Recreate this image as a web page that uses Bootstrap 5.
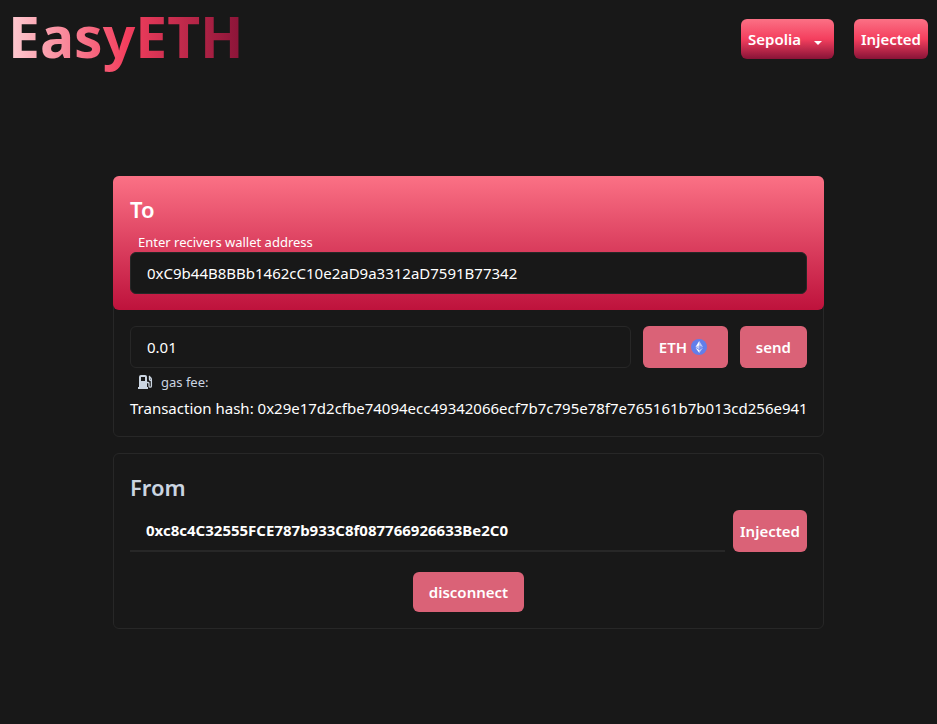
<!DOCTYPE html>
<html lang="en" data-bs-theme="dark">
<head>
<meta charset="utf-8">
<meta name="viewport" content="width=device-width, initial-scale=1">
<title>EasyETH</title>
<link href="https://cdn.jsdelivr.net/npm/bootstrap@5.3.0/dist/css/bootstrap.min.css" rel="stylesheet">
<style>
body { background: #181818; color: #fff; font-family: "Noto Sans", "Open Sans", sans-serif; font-size: 15px; line-height: 24px; }
.logo { font-size: 57px; line-height: 72px; padding-bottom: 6px; font-weight: 700; color: transparent; background: linear-gradient(to right, #fecdd3, #f43f5e, #881337); -webkit-background-clip: text; background-clip: text; text-decoration: none; }
.top-bar { padding: 0 9px 0 8px; }
.bar-btn { height: 40px; padding: 0 7px; border: 0; border-radius: 6px; color: #fff; font-size: 15px; font-weight: 600; background-image: linear-gradient(#fb7185, #f43f5e 50%, #881337); }
.network { appearance: none; width: 93px; background-image: url("data:image/svg+xml,%3Csvg xmlns='http://www.w3.org/2000/svg' viewBox='0 0 8 4'%3E%3Cpath fill='%23fff' d='M0 0h8L4 4z'/%3E%3C/svg%3E"), linear-gradient(#fb7185, #f43f5e 50%, #881337); background-repeat: no-repeat; background-size: 8px 4px, 100% 100%; background-position: right 12px top 22px, 0 0; }
.network option { background: #181818; }
.wallet { max-width: 711px; margin-top: 98px; }
.panel { border: 1px solid #272727; border-radius: 6px; }
.receiver { margin: -1px -1px 0; padding: 16px 17px; border-radius: 6px; background: linear-gradient(#fb7185, #be123c); }
.heading { font-size: 22px; line-height: 34px; font-weight: 600; margin: 0 0 6px; }
.muted { color: #cbd5e1; }
.hint { font-size: 13px; line-height: 20px; padding-left: 8px; }
.field, .field:focus { height: 42px; padding: 0 16px; border: 1px solid #272727; border-radius: 6px; background: #181818; color: #fff; font-size: 15px; box-shadow: none; }
.line-field, .line-field:focus { border-width: 0 0 2px; border-radius: 0; font-weight: 700; background: transparent; }
.rose-btn { height: 42px; border: 0; border-radius: 6px; padding: 0 16px; background: #da6277; color: #fff; font-size: 15px; font-weight: 600; }
.send-row { gap: 12px; }
.token { width: 85px; }
.slim { padding: 0 7px; }
.low { height: 40px; }
.hash { overflow-wrap: anywhere; }
@media (min-width: 768px) { .hash { white-space: nowrap; } }
</style>
</head>
<body>
<header class="top-bar d-flex align-items-center justify-content-between">
  <a class="logo" href="#">EasyETH</a>
  <div class="d-flex gap-3">
    <select class="bar-btn network me-1" aria-label="Network"><option>Sepolia</option></select>
    <button class="bar-btn" type="button">Injected</button>
  </div>
</header>
<main class="wallet mx-auto d-flex flex-column gap-3">
  <section class="panel">
    <div class="receiver">
      <h2 class="heading">To</h2>
      <label class="hint d-block" for="address">Enter recivers wallet address</label>
      <input class="field form-control" id="address" type="text" value="0xC9b44B8BBb1462cC10e2aD9a3312aD7591B77342">
    </div>
    <div class="p-3">
      <div class="d-flex send-row">
        <input class="field form-control flex-grow-1" type="text" value="0.01" aria-label="Amount">
        <button class="rose-btn token flex-shrink-0 d-flex align-items-center gap-1" type="button">ETH
          <svg width="16" height="16" viewBox="0 0 32 32" aria-hidden="true"><circle cx="16" cy="16" r="16" fill="#627eea"/><g fill="#fff"><path fill-opacity=".6" d="M16.5 4v8.87l7.5 3.35z"/><path d="M16.5 4 9 16.22l7.5-3.35z"/><path fill-opacity=".6" d="M16.5 21.97V28L24 17.62z"/><path d="M16.5 28v-6.03L9 17.62z"/><path fill-opacity=".2" d="m16.5 20.57 7.5-4.35-7.5-3.35z"/><path fill-opacity=".6" d="m9 16.22 7.5 4.35v-7.7z"/></g></svg>
        </button>
        <button class="rose-btn flex-shrink-0" type="button">send</button>
      </div>
      <div class="hint muted d-flex align-items-center gap-2 mt-1">
        <svg width="15" height="15" viewBox="0 0 15 15" aria-hidden="true"><path fill="#cbd5e1" fill-rule="evenodd" d="M1 12V2q0-2 2-2h4q2 0 2 2v10h1v2H0v-2zM3 2v4h4V2z"/><path d="M9 7.500h1q1 0 1 1V11q0 1.200 1.200 1.200T13.400 11V4.500Q13.400 3 11 1M11.500 2v2.500q0 1 1.500 1.200" fill="none" stroke="#cbd5e1" stroke-width="1.300"/></svg>
        gas fee:
      </div>
      <div class="hash mt-1">Transaction hash: 0x29e17d2cfbe74094ecc49342066ecf7b7c795e78f7e765161b7b013cd256e941</div>
    </div>
  </section>
  <section class="panel p-3">
    <h2 class="heading muted">From</h2>
    <div class="d-flex gap-2">
      <input class="field line-field form-control flex-grow-1" type="text" value="0xc8c4C32555FCE787b933C8f087766926633Be2C0" aria-label="Sender wallet address">
      <button class="rose-btn slim flex-shrink-0" type="button">Injected</button>
    </div>
    <div class="text-center mt-3 pt-1"><button class="rose-btn low" type="button">disconnect</button></div>
  </section>
</main>
<script src="https://cdn.jsdelivr.net/npm/bootstrap@5.3.0/dist/js/bootstrap.bundle.min.js"></script>
</body>
</html>
